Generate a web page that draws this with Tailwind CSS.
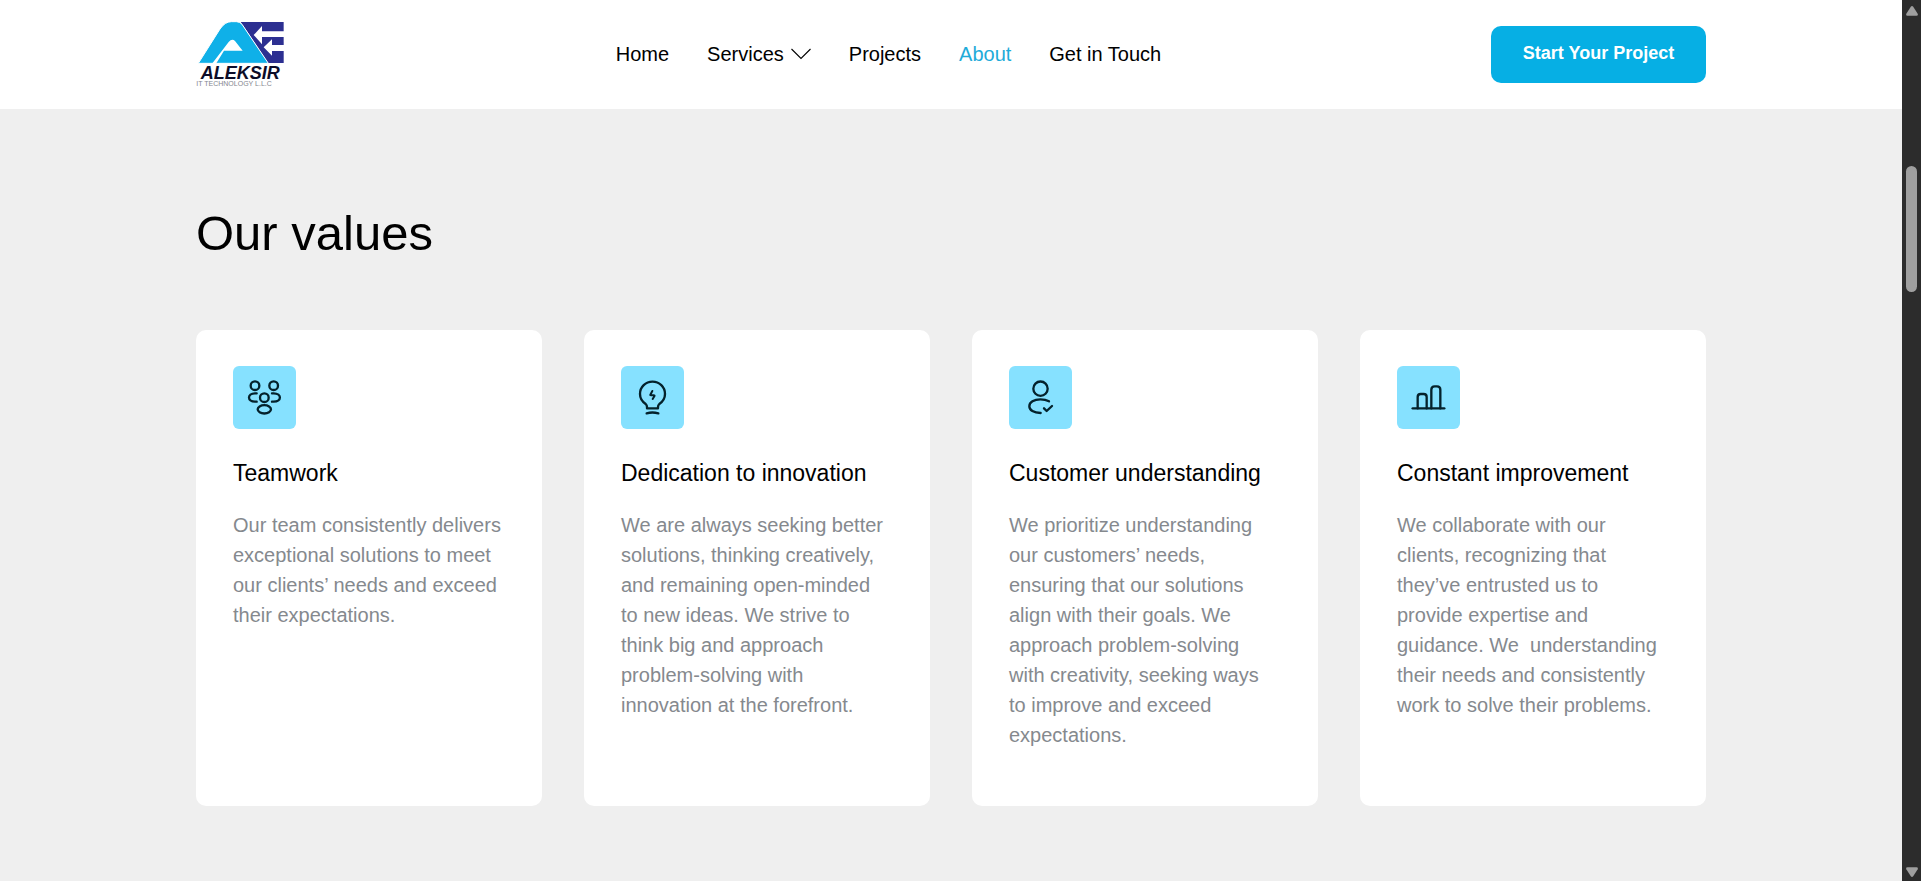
<!DOCTYPE html>
<html lang="en">
<head>
<meta charset="utf-8">
<meta name="viewport" content="width=device-width, initial-scale=1">
<title>Aleksir – About</title>
<script src="https://cdn.jsdelivr.net/npm/@tailwindcss/browser@4"></script>
</head>
<body class="flex h-screen overflow-hidden bg-[#efefef] font-['Liberation_Sans',Arial,sans-serif] text-black">
  <div class="min-w-0 flex-1">
    <header class="flex items-center justify-between bg-white px-[196px] py-5">
      <a href="#" aria-label="Aleksir IT Technology L.L.C" class="block">
        <svg class="h-[69px] w-[90px]" viewBox="48 30 270 207">
          <path fill="#2c2f91" d="M182 36 H311 V159 H264 Z"/>
          <path fill="#0fb0e8" stroke="#fff" stroke-width="3" d="M55 160 L120 57 Q135 35 154 35 H169 Q180 35 186 43 L265 160 Z"/>
          <path fill="#fff" d="M96 161 L146 96 Q156 84 165 93 L188 122 H132 L108 161 Z"/>
          <path fill="#fff" d="M221 75 L246 48 V64 H312 V81 H246 V103 Z"/>
          <path fill="#fff" d="M251 112 L276 88 V105 H312 V123 H276 V137 Z"/>
          <text x="62" y="207" fill="#0c0c28" font-size="54" font-weight="700" font-style="italic">ALEKSIR</text>
          <text x="49" y="229" fill="#85868f" font-size="21">IT TECHNOLOGY L.L.C</text>
        </svg>
      </a>
      <nav aria-label="Main" class="flex items-center gap-[38px] pb-0.5 text-[20px] leading-[30px]">
        <a href="#">Home</a>
        <a href="#" class="flex items-center gap-[7px]">Services
          <svg class="h-3 w-5" viewBox="0 0 20 12" fill="none" stroke="#000" stroke-width="1.1"><path d="M.500 1 L10 10.500 L19.500 1"/></svg>
        </a>
        <a href="#">Projects</a>
        <a href="#" aria-current="page" class="text-[#1fabd9]">About</a>
        <a href="#">Get in Touch</a>
      </nav>
      <button type="button" class="h-[57px] w-[215px] rounded-[10px] bg-[#06afe4] pb-0.5 text-[18px] font-bold text-white">Start Your Project</button>
    </header>

    <main class="px-[196px] pt-[94px] pb-[75px]">
      <h1 class="text-[49px] leading-[60px]">Our values</h1>
      <div class="mt-[67px] grid grid-cols-4 gap-[42px]">
        <article class="rounded-[10px] bg-white pt-9 pr-10 pb-14 pl-[37px]">
          <svg class="size-[63px] rounded-md bg-[#86e1ff]" viewBox="24 24 189 189" fill="none" stroke="#04222c" stroke-width="7" stroke-linecap="round">
            <circle cx="90" cy="83" r="13"/><circle cx="146" cy="83" r="13"/><circle cx="118" cy="119" r="13"/>
            <ellipse cx="118" cy="154" rx="20" ry="12.500"/>
            <path d="M95 106 H90 C66 106 66 131 90 131 H95 M141 106 H146 C171 106 171 131 146 131 H141"/>
          </svg>
          <h2 class="mt-[27px] text-[23px] leading-[34px]">Teamwork</h2>
          <p class="mt-5 text-[20px] leading-[30px] text-[#85898e]">Our team consistently delivers exceptional solutions to meet our clients’ needs and exceed their expectations.</p>
        </article>
        <article class="rounded-[10px] bg-white pt-9 pr-10 pb-14 pl-[37px]">
          <svg class="size-[63px] rounded-md bg-[#86e1ff]" viewBox="24 24 189 189" fill="none" stroke="#04222c" stroke-width="7" stroke-linecap="round" stroke-linejoin="round">
            <path d="M102 151 H135 V147 Q135 142 139 138 C149 131 156 121 156 108 C156 87 139 71 118.500 71 C98 71 81 87 81 108 C81 121 88 131 98 138 Q102 142 102 147 Z"/>
            <path d="M101 166 Q118 161 136 166"/>
            <path stroke-width="6" d="M118 99 L112 110 Q111 112 114 112 H122 Q126 112 124 115 L119 123"/>
          </svg>
          <h2 class="mt-[27px] text-[23px] leading-[34px]">Dedication to innovation</h2>
          <p class="mt-5 text-[20px] leading-[30px] text-[#85898e]">We are always seeking better solutions, thinking creatively, and remaining open-minded to new ideas. We strive to think big and approach problem-solving with innovation at the forefront.</p>
        </article>
        <article class="rounded-[10px] bg-white pt-9 pr-10 pb-14 pl-[37px]">
          <svg class="size-[63px] rounded-md bg-[#86e1ff]" viewBox="24 24 189 189" fill="none" stroke="#04222c" stroke-width="7" stroke-linecap="round" stroke-linejoin="round">
            <circle cx="118.500" cy="92" r="21.500"/>
            <path d="M144 130 C137 126 128 124 118 124 C99 124 85 133 85 144.500 C85 156 98 165 119 165"/>
            <path d="M129 151 L137 159 L153 144"/>
          </svg>
          <h2 class="mt-[27px] text-[23px] leading-[34px]">Customer understanding</h2>
          <p class="mt-5 text-[20px] leading-[30px] text-[#85898e]">We prioritize understanding our customers’ needs, ensuring that our solutions align with their goals. We approach problem-solving with creativity, seeking ways to improve and exceed expectations.</p>
        </article>
        <article class="rounded-[10px] bg-white pt-9 pr-10 pb-14 pl-[37px]">
          <svg class="size-[63px] rounded-md bg-[#86e1ff]" viewBox="24 24 189 189" fill="none" stroke="#04222c" stroke-width="7" stroke-linecap="round">
            <path d="M71 151 H166"/>
            <path d="M86 151 V117 Q86 108 95 108 H104 Q113 108 113 117 V151 M127 151 V95 Q127 85 137 85 H144 Q154 85 154 95 V151"/>
          </svg>
          <h2 class="mt-[27px] text-[23px] leading-[34px]">Constant improvement</h2>
          <p class="mt-5 text-[20px] leading-[30px] text-[#85898e]">We collaborate with our clients, recognizing that they’ve entrusted us to provide expertise and guidance. We&nbsp; understanding their needs and consistently work to solve their problems.</p>
        </article>
      </div>
    </main>
  </div>

  <!-- Dark scrollbar rail -->
  <div aria-hidden="true" class="flex w-[19px] shrink-0 flex-col items-center bg-[#2c2c2c] pt-1.5 pb-1">
    <svg class="h-2.5 w-3" viewBox="0 0 12 10" fill="#9f9f9f"><path d="M4.800 .8 Q6 -.8 7.200 .8 L11.700 7.800 Q12.400 9.800 10.500 9.800 H1.500 Q-.4 9.800 .3 7.800 Z"/></svg>
    <div class="mt-[150px] h-[126px] w-[11px] rounded-full bg-[#9f9f9f]"></div>
    <svg class="mt-auto h-2.5 w-3 rotate-180" viewBox="0 0 12 10" fill="#9f9f9f"><path d="M4.800 .8 Q6 -.8 7.200 .8 L11.700 7.800 Q12.400 9.800 10.500 9.800 H1.500 Q-.4 9.800 .3 7.800 Z"/></svg>
  </div>
</body>
</html>
